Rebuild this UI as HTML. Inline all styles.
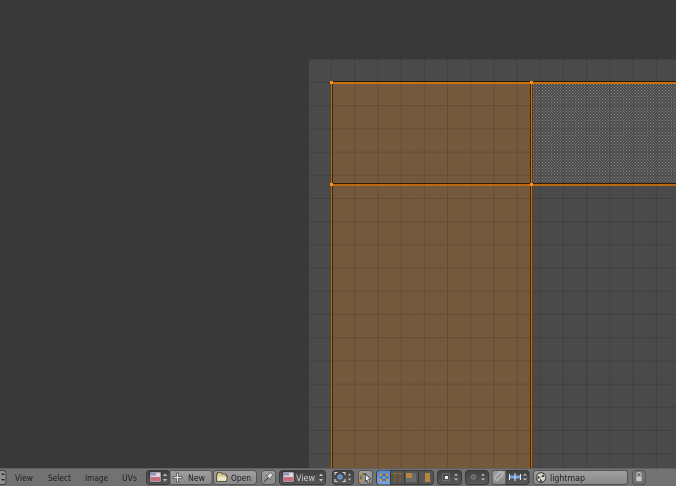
<!DOCTYPE html>
<html>
<head>
<meta charset="utf-8">
<style>
html,body{margin:0;padding:0;background:#393939;width:676px;height:486px;overflow:hidden}
svg{position:absolute;left:0;top:0;display:block}
text{font-family:"DejaVu Sans","Liberation Sans",sans-serif;font-size:9px;fill:#1c1c1c;lengthAdjust:spacingAndGlyphs}
</style>
</head>
<body>
<svg width="676" height="486" viewBox="0 0 676 486" xmlns="http://www.w3.org/2000/svg">
<defs>
<pattern id="grid" x="331" y="82" width="23.2" height="23.2" patternUnits="userSpaceOnUse">
<rect x="0" y="0" width="1" height="23.2" fill="#000" fill-opacity=".13"/>
<rect x="0" y="0" width="23.2" height="1" fill="#000" fill-opacity=".13"/>
</pattern>
<pattern id="dots" x="533" y="84" width="3" height="3" patternUnits="userSpaceOnUse">
<rect width="3" height="3" fill="#4c4c4c"/>
<rect width="1" height="1" fill="#858585"/>
<rect x="1.500" y="1.500" width="1" height="1" fill="#858585"/>
</pattern>
<linearGradient id="hd" x1="0" y1="0" x2="0" y2="1"><stop offset="0" stop-color="#747474"/><stop offset="1" stop-color="#707070"/></linearGradient>
<linearGradient id="lt" x1="0" y1="0" x2="0" y2="1"><stop offset="0" stop-color="#a0a0a0"/><stop offset="1" stop-color="#888"/></linearGradient>
<linearGradient id="dk" x1="0" y1="0" x2="0" y2="1"><stop offset="0" stop-color="#404040"/><stop offset="1" stop-color="#5a5a5a"/></linearGradient>
<linearGradient id="bl" x1="0" y1="0" x2="0" y2="1"><stop offset="0" stop-color="#5b86c4"/><stop offset="1" stop-color="#7aa3dc"/></linearGradient>
</defs>

<rect width="676" height="486" fill="#393939"/>

<!-- image area -->
<rect x="309" y="59" width="367" height="409" fill="#4a4a4a"/>
<rect x="333" y="84" width="198" height="384" fill="#75593c"/>
<rect x="533" y="84" width="143" height="99" fill="url(#dots)"/>
<rect x="309" y="59" width="367" height="409" fill="url(#grid)"/>

<!-- UV edges -->
<rect x="331" y="81" width="345" height="1" fill="#241608"/>
<rect x="331" y="82" width="345" height="2" fill="#c9720f"/>
<rect x="331" y="183" width="345" height="1" fill="#2d1b08"/>
<rect x="331" y="184" width="345" height="2" fill="#b9690f"/>
<rect x="331" y="82" width="1" height="386" fill="#b9690f"/>
<rect x="332" y="82" width="1" height="386" fill="#3e2407"/>
<rect x="530" y="82" width="1" height="386" fill="#3e2407"/>
<rect x="531" y="82" width="1" height="386" fill="#c9720f"/>
<rect x="532" y="82" width="1" height="386" fill="#5e3a0c"/>
<rect x="330" y="81" width="3" height="3" fill="#ff8c1a"/>
<rect x="530" y="81" width="3" height="3" fill="#ff8c1a"/>
<rect x="330" y="183" width="3" height="3" fill="#ff8c1a"/>
<rect x="530" y="183" width="3" height="3" fill="#ff8c1a"/>

<!-- header -->
<rect x="0" y="468" width="676" height="18" fill="url(#hd)"/>
<rect x="0" y="468" width="676" height="1" fill="#606060"/>

<rect x="-8" y="470.500" width="14" height="14" rx="3" fill="#8f8f8f" stroke="#444"/>
<path d="M1 475l2-2 2 2zM1 479l2 2 2-2z" fill="#222"/>

<text x="15" y="481" textLength="18" lengthAdjust="spacingAndGlyphs">View</text>
<text x="48" y="481" textLength="23" lengthAdjust="spacingAndGlyphs">Select</text>
<text x="85" y="481" textLength="23" lengthAdjust="spacingAndGlyphs">Image</text>
<text x="122" y="481" textLength="15" lengthAdjust="spacingAndGlyphs">UVs</text>

<!-- image selector -->
<rect x="146.500" y="470.500" width="23" height="14" rx="3" fill="url(#dk)" stroke="#3a3a3a"/>
<rect x="150" y="472" width="11" height="10" fill="#ded6de" stroke="#222" stroke-width=".6"/>
<rect x="151" y="477" width="9" height="4" fill="#c96c78"/>
<rect x="151" y="473" width="5" height="2.500" fill="#8c93c4"/>
<path d="M163 476l2-2.500 2 2.500zM163 479l2 2.500 2-2.500z" fill="#c4c4c4"/>

<!-- New -->
<path d="M170 470.500h39a3 3 0 0 1 3 3v8a3 3 0 0 1-3 3h-39z" fill="url(#lt)" stroke="#555"/>
<path d="M176.500 473h2v3.500h3.500v2h-3.500v3.500h-2v-3.500h-3.500v-2h3.500z" fill="#e8e8e8" stroke="#444" stroke-width=".7"/>
<text x="188" y="481" textLength="17" lengthAdjust="spacingAndGlyphs">New</text>

<!-- Open -->
<rect x="213.500" y="470.500" width="43" height="14" rx="3" fill="url(#lt)" stroke="#555"/>
<path d="M216.500 481.500v-7.500h1v-1.500h3.500l1 1.500h4v2h1.500l-1 5.500z" fill="#d8cc98" stroke="#45422e" stroke-width=".8"/>
<rect x="218" y="477" width="8" height="3.500" fill="#efe8c8"/>
<text x="231" y="481" textLength="20" lengthAdjust="spacingAndGlyphs">Open</text>

<!-- pin -->
<rect x="261.500" y="470.500" width="14" height="14" rx="3" fill="url(#lt)" stroke="#555"/>
<path d="M264 482l4-4" stroke="#444" stroke-width="1" fill="none"/>
<path d="M266.500 475.500l4 4 .5-2.500 2-2-2.500-2.500-2 2z" fill="#e0e0e0" stroke="#555" stroke-width=".6"/>

<!-- View dropdown -->
<rect x="279.500" y="470.500" width="46" height="14" rx="3" fill="url(#dk)" stroke="#3a3a3a"/>
<rect x="283" y="472" width="11" height="10" fill="#ded6de" stroke="#222" stroke-width=".6"/>
<rect x="284" y="477" width="9" height="4" fill="#c96c78"/>
<rect x="284" y="473" width="5" height="2.500" fill="#8c93c4"/>
<text x="296" y="481" textLength="19" lengthAdjust="spacingAndGlyphs" style="fill:#cfcfcf">View</text>
<path d="M319 476l2-2.500 2 2.500zM319 479l2 2.500 2-2.500z" fill="#c4c4c4"/>

<!-- pivot -->
<rect x="332.500" y="470.500" width="21" height="14" rx="3" fill="url(#dk)" stroke="#3a3a3a"/>
<path d="M335 475v-2.500h2.500M342.500 472.500h2.500v2.500M335 479v2.500h2.500M342.500 481.500h2.500v-2.500" stroke="#dcdcdc" fill="none"/>
<circle cx="340" cy="477" r="2.200" fill="#4d86d8" stroke="#a8c0e4" stroke-width=".6"/>
<path d="M348 475.500l1.500-2 1.500 2zM348 478.500l1.500 2 1.500-2z" fill="#c4c4c4"/>

<!-- sticky/select icon -->
<rect x="358.500" y="470.500" width="14" height="14" rx="3" fill="url(#lt)" stroke="#555"/>
<rect x="360" y="473" width="2.500" height="2.500" fill="#e0902a"/>
<rect x="360" y="479" width="2.500" height="2.500" fill="#e0902a"/>
<path d="M362 474h4M361 475.500v4" stroke="#444" fill="none"/>
<path d="M365.500 474l5 5-2 .5 1 3-1.500.5-1-3-1.500 1.500z" fill="#f0f0f0" stroke="#222" stroke-width=".6"/>

<!-- selection mode -->
<rect x="376.500" y="470.500" width="57" height="14" rx="3" fill="#565656" stroke="#3a3a3a"/>
<path d="M377 473.500a3 3 0 0 1 3-3h10v14h-10a3 3 0 0 1-3-3z" fill="url(#bl)"/>
<path d="M390.500 470v15M404.500 470v15M418.500 470v15" stroke="#3a3a3a"/>
<path d="M381 475h7M381 480h7M381 474v7M387 474v7" stroke="#2a3a50" stroke-width=".7" fill="none"/>
<path d="M380 474h2v2h-2zM386 474h2v2h-2zM380 479h2v2h-2zM386 479h2v2h-2z" fill="#e8962a"/>
<rect x="393" y="473" width="9" height="9" fill="#5a5148"/>
<path d="M393 473.500h9M395 473v9M400 473v9" stroke="#90683a" stroke-width="1" fill="none"/>
<rect x="406" y="473" width="10" height="9" fill="#6a6a6a"/>
<rect x="406" y="473" width="6" height="5" fill="#b8843e"/>
<rect x="420" y="473" width="5" height="9" fill="#565656"/>
<rect x="425" y="473" width="5" height="9" fill="#b8843e"/>

<!-- sticky mode -->
<rect x="437.500" y="470.500" width="24" height="14" rx="3" fill="url(#dk)" stroke="#3a3a3a"/>
<rect x="442.500" y="473.500" width="7" height="7" fill="none" stroke="#8a8a8a" stroke-dasharray="1 1"/>
<rect x="445" y="476" width="3" height="3" fill="#eee"/>
<path d="M454 475.500l2-2 2 2zM454 478.500l2 2 2-2z" fill="#c4c4c4"/>

<!-- proportional -->
<rect x="465.500" y="470.500" width="23" height="14" rx="3" fill="url(#dk)" stroke="#3a3a3a"/>
<circle cx="473.500" cy="477" r="3.500" fill="#747474" stroke="#4a4a4a"/>
<circle cx="473.500" cy="477" r="1.500" fill="#606060"/>
<path d="M481 475.500l2-2 2 2zM481 478.500l2 2 2-2z" fill="#c4c4c4"/>

<!-- snap -->
<path d="M506 470.500h-11a3 3 0 0 0-3 3v8a3 3 0 0 0 3 3h11z" fill="url(#lt)" stroke="#555"/>
<path d="M497 480.500l5.500-5.500a1.800 1.800 0 0 0-3-2.500l-4.500 4.500a3 3 0 0 0 2 3.500z" fill="none" stroke="#bcbcbc" stroke-width="1.300"/>
<path d="M506 470.500h20a3 3 0 0 1 3 3v8a3 3 0 0 1-3 3h-20z" fill="url(#dk)" stroke="#3a3a3a"/>
<rect x="510" y="475.500" width="10" height="3" fill="#6ea6ea"/>
<path d="M509.500 474v6M515 473v8M520.500 474v6" stroke="#eaeaea"/>
<path d="M523 475.500l2-2 2 2zM523 478.500l2 2 2-2z" fill="#c4c4c4"/>

<!-- lightmap field -->
<rect x="533.500" y="470.500" width="94" height="14" rx="3" fill="url(#lt)" stroke="#555"/>
<circle cx="541" cy="477.500" r="4.800" fill="#d8d8c8" stroke="#2a2a2a" stroke-width=".8"/>
<path d="M537.500 475.500l3 2-3 2zM541 477l2.500-3 1 3zM540.500 478.500l2 3-3 .2z" fill="#444"/>
<text x="550" y="481" textLength="35" lengthAdjust="spacingAndGlyphs">lightmap</text>

<!-- lock -->
<rect x="632.500" y="470.500" width="13" height="14" rx="3" fill="url(#hd)" stroke="#555"/>
<path d="M637 476v-1.500a2 2 0 0 1 4 0v1.500" fill="none" stroke="#cfcfcf"/>
<rect x="636" y="476" width="6" height="5.500" fill="#c8c8c8" stroke="#666" stroke-width=".5"/>
</svg>
</body>
</html>
